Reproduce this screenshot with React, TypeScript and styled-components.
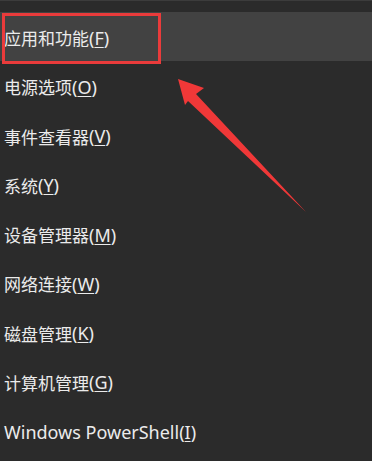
import React from "react";
import styled, { createGlobalStyle } from "styled-components";

const Global = createGlobalStyle`
  html, body { margin: 0; padding: 0; background: #2b2b2b; }
  body { width: 372px; height: 461px; overflow: hidden; }
`;

const Menu = styled.div`
  position: relative;
  width: 372px;
  height: 461px;
  background: #2b2b2b;
  border-top: 1px solid #3c3c3c;
  box-sizing: border-box;
  padding-top: 11px;
  display: flex;
  flex-direction: column;
  font-family: "Noto Sans", "Noto Sans CJK SC", sans-serif;
`;

const Item = styled.div<{ $active?: boolean }>`
  height: 49.25px;
  display: flex;
  align-items: center;
  padding-left: 4px;
  padding-top: 2px;
  box-sizing: border-box;
  background: ${(p) => (p.$active ? "#424242" : "transparent")};
  color: #ebebeb;
  font-size: 18px;
  white-space: nowrap;
`;

const Label = styled.span`
  font-size: 17px;
`;

const Key = styled.span`
  text-decoration: underline;
  text-underline-offset: 2px;
  text-decoration-thickness: 1px;
`;

const Box = styled.div`
  position: absolute;
  left: 2px;
  top: 12px;
  width: 159px;
  height: 51px;
  border: 3px solid #ea3b3b;
  box-sizing: border-box;
`;

const Arrow = styled.svg`
  position: absolute;
  left: 0;
  top: 0;
`;

const items: [string, string][] = [
  ["应用和功能", "F"],
  ["电源选项", "O"],
  ["事件查看器", "V"],
  ["系统", "Y"],
  ["设备管理器", "M"],
  ["网络连接", "W"],
  ["磁盘管理", "K"],
  ["计算机管理", "G"],
  ["Windows PowerShell", "I"],
];

export default function App() {
  return (
    <>
      <Global />
      <Menu>
        {items.map(([label, key], i) => (
          <Item key={label} $active={i === 0}>
            {/^[A-Za-z]/.test(label) ? label : <Label>{label}</Label>}(<Key>{key}</Key>)
          </Item>
        ))}
        <Box />
        <Arrow width="372" height="461" viewBox="0 0 372 461">
          <path
            d="M178 78 L204 87 L196 93 L306 211 L188 100 L185 104 Z"
            fill="#f03838"
          />
        </Arrow>
      </Menu>
    </>
  );
}
